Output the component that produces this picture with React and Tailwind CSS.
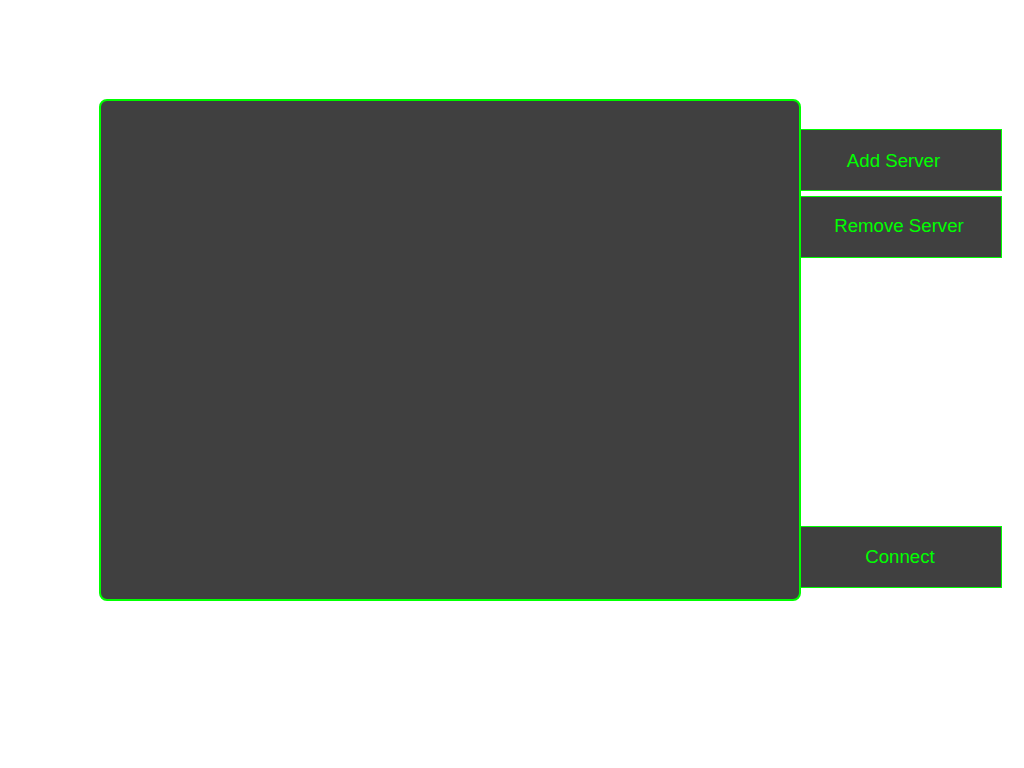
import React from "react";

function SideButton({ label, className = "" }) {
  return (
    <button
      className={
        "w-[202px] h-[62px] bg-[#404040] border border-[#00ff00] text-[#00ff00] text-[14pt] flex items-center justify-center " +
        className
      }
    >
      {label}
    </button>
  );
}

export default function App() {
  return (
    <div
      className="w-[1024px] h-[768px] bg-white pt-[99px] pl-[99px] flex items-start"
      style={{ fontFamily: '"Liberation Sans", Arial, sans-serif' }}
    >
      {/* server list panel */}
      <div className="w-[702px] h-[502px] bg-[#404040] border-2 border-[#00ff00] rounded-lg" />

      {/* buttons */}
      <div className="flex flex-col -ml-[1px] mt-[30px] relative">
        <SideButton label="Add Server" className="pr-[15px] pt-[1px]" />
        <SideButton label="Remove Server" className="mt-[5px] pr-[4px] pb-[2px]" />
        <SideButton label="Connect" className="mt-[268px] pr-[2px]" />
      </div>
    </div>
  );
}
